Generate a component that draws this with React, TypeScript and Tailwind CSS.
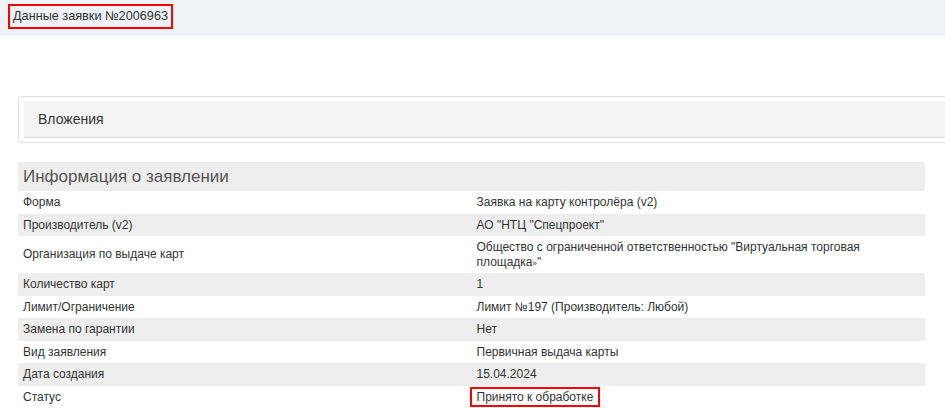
import React from 'react';
import { clsx } from 'clsx';

const rows: { label: string; value: React.ReactNode }[] = [
    { label: 'Форма', value: 'Заявка на карту контролёра (v2)' },
    { label: 'Производитель (v2)', value: 'АО "НТЦ "Спецпроект"' },
    {
        label: 'Организация по выдаче карт',
        value: (
            <>
                Общество с ограниченной ответственностью "Виртуальная торговая площадка
                <span className="text-[8px] leading-none">»</span>"
            </>
        ),
    },
    { label: 'Количество карт', value: '1' },
    { label: 'Лимит/Ограничение', value: 'Лимит №197 (Производитель: Любой)' },
    { label: 'Замена по гарантии', value: 'Нет' },
    { label: 'Вид заявления', value: 'Первичная выдача карты' },
    { label: 'Дата создания', value: '15.04.2024' },
    { label: 'Статус', value: 'status' },
];

export default function App() {
    return (
        <div className="h-[408px] w-[945px] overflow-hidden bg-white text-[#333] font-['Liberation_Sans',Arial,sans-serif]">
            {/* Header */}
            <div className="h-[35px] bg-[#eff2f7] border-b border-[#dde1e9] pl-2 pt-[3px]">
                <div className="inline-block border-2 border-[#f00] px-[3px] h-[25px] leading-[21px] text-[12.7px]">
                    Данные заявки №2006963
                </div>
            </div>

            <div className="pl-[18px] pt-[61px]">
                {/* Attachments */}
                <div className="w-[1000px] border border-[#ddd] rounded-[4px] px-[5px] pt-[4px] pb-[4px]">
                    <div className="h-[37px] bg-[#f4f4f4] border-b border-[#ddd] flex items-center pl-[14px] text-[14px]">
                        Вложения
                    </div>
                </div>

                {/* Info table */}
                <div className="w-[907px] mt-[19px]">
                    <div className="h-[29px] bg-[#eee] flex items-center pl-[5px] text-[17px] text-[#555]">
                        Информация о заявлении
                    </div>
                    {rows.map((r, i) => (
                        <div
                            key={r.label}
                            className={clsx('flex text-[12px] leading-[14.5px]', i % 2 === 1 && 'bg-[#eee]')}
                        >
                            <div className="w-1/2 pl-[5px] py-[4px] flex items-center">{r.label}</div>
                            <div className="w-1/2 pl-[5px] pr-2 py-[4px]">
                                {r.value === 'status' ? (
                                    <span className="inline-block -ml-[7px] -my-[3px] border-2 border-[#f00] px-[5px] py-[1px]">
                                        Принято к обработке
                                    </span>
                                ) : (
                                    r.value
                                )}
                            </div>
                        </div>
                    ))}
                </div>
            </div>
        </div>
    );
}
